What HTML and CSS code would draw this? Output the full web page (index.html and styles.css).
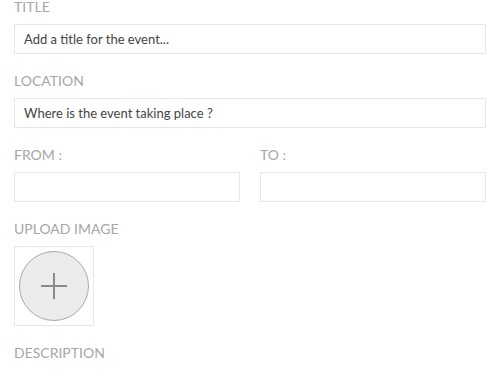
FILE: index.html
```html
<!DOCTYPE html>
<html lang="en">
<head>
    <meta charset="UTF-8">
    <meta name="viewport" content="width=device-width, initial-scale=1.0">
    <title>New Event</title>
    <link rel="stylesheet" href="styles.css">
</head>
<body>
    <form class="eventform">
        <div class="field">
            <label for="etitle">Title</label>
            <input type="text" id="etitle" placeholder="Add a title for the event...">
        </div>
        <div class="field">
            <label for="eloc">Location</label>
            <input type="text" id="eloc" placeholder="Where is the event taking place ?">
        </div>
        <div class="row">
            <div class="field">
                <label for="efrom">From :</label>
                <input type="text" id="efrom">
            </div>
            <div class="field">
                <label for="eto">To :</label>
                <input type="text" id="eto">
            </div>
        </div>
        <div class="field">
            <label>Upload Image</label>
            <div class="upload">
                <div class="circle">
                    <svg width="26" height="26" viewBox="0 0 26 26">
                        <line x1="13" y1="0" x2="13" y2="26" stroke="#8a8a8a" stroke-width="2"/>
                        <line x1="0" y1="13" x2="26" y2="13" stroke="#8a8a8a" stroke-width="2"/>
                    </svg>
                </div>
            </div>
        </div>
        <div class="field">
            <label for="edes">Description</label>
        </div>
    </form>
</body>
</html>
```

FILE: styles.css
```css
body{
    margin: 0;
    background-color: white;
    font-family: Lato, 'Open Sans', sans-serif;
}

.eventform{
    width: 472px;
    padding-left: 14px;
}

.field{
    margin-bottom: 20px;
}

.field label{
    display: block;
    font-size: 14px;
    line-height: 14px;
    color: #a6a6a6;
    text-transform: uppercase;
    margin-bottom: 10px;
}

.field input{
    display: block;
    box-sizing: border-box;
    width: 100%;
    height: 30px;
    margin: 0;
    padding: 0 9px;
    border: 1px solid #e6e6e6;
    font-family: Lato, 'Open Sans', sans-serif;
    font-size: 13px;
    color: #444;
    outline: none;
}

.field input::placeholder{
    color: #444;
    opacity: 1;
}

.row{
    display: grid;
    grid-template-columns: 1fr 1fr;
    column-gap: 20px;
}

.upload{
    box-sizing: border-box;
    width: 80px;
    height: 80px;
    border: 1px solid #e6e6e6;
    display: flex;
    align-items: center;
    justify-content: center;
}

.circle{
    box-sizing: border-box;
    width: 70px;
    height: 70px;
    border-radius: 50%;
    border: 1px solid #a8a8a8;
    background-color: #ececec;
    display: flex;
    align-items: center;
    justify-content: center;
}

.circle svg{
    display: block;
}
```
